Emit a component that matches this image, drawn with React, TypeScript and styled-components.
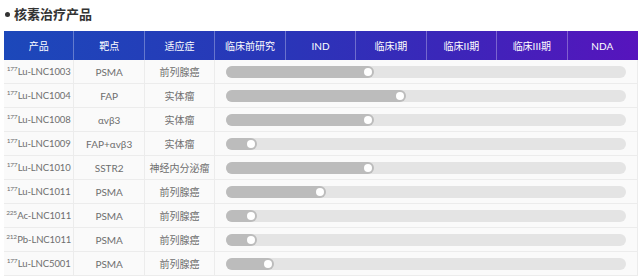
import React from 'react'
import styled, { createGlobalStyle } from 'styled-components'

type Product = {
  isotope: string
  name: string
  target: string
  indication: string
  progress: number
}

const phases = ['临床前研究', 'IND', '临床I期', '临床II期', '临床III期', 'NDA']

const products: Product[] = [
  { isotope: '177', name: 'Lu-LNC1003', target: 'PSMA', indication: '前列腺癌', progress: 147 },
  { isotope: '177', name: 'Lu-LNC1004', target: 'FAP', indication: '实体瘤', progress: 179 },
  { isotope: '177', name: 'Lu-LNC1008', target: 'αvβ3', indication: '实体瘤', progress: 147 },
  { isotope: '177', name: 'Lu-LNC1009', target: 'FAP+αvβ3', indication: '实体瘤', progress: 31 },
  { isotope: '177', name: 'Lu-LNC1010', target: 'SSTR2', indication: '神经内分泌瘤', progress: 147 },
  { isotope: '177', name: 'Lu-LNC1011', target: 'PSMA', indication: '前列腺癌', progress: 100 },
  { isotope: '225', name: 'Ac-LNC1011', target: 'PSMA', indication: '前列腺癌', progress: 31 },
  { isotope: '212', name: 'Pb-LNC1011', target: 'PSMA', indication: '前列腺癌', progress: 31 },
  { isotope: '177', name: 'Lu-LNC5001', target: 'PSMA', indication: '前列腺癌', progress: 48 },
]

const BAR_WIDTH = 399

const App: React.FC = () => {
  return (
    <Page>
      <GlobalStyle />
      <Title>
        <Dot />
        核素治疗产品
      </Title>
      <Table>
        <HeaderRow>
          <HeaderCell>产品</HeaderCell>
          <HeaderCell>靶点</HeaderCell>
          <HeaderCell>适应症</HeaderCell>
          {phases.map((p, i) => (
            <HeaderCell key={p} $last={i === phases.length - 1}>
              {p}
            </HeaderCell>
          ))}
        </HeaderRow>
        {products.map((item) => (
          <BodyRow key={item.isotope + item.name}>
            <ProductCell>
              <Isotope>{item.isotope}</Isotope>
              {item.name}
            </ProductCell>
            <Cell>{item.target}</Cell>
            <Cell>{item.indication}</Cell>
            <BarCell>
              <Track>
                <Fill style={{ width: `${(item.progress / BAR_WIDTH) * 100}%` }}>
                  <Thumb />
                </Fill>
              </Track>
            </BarCell>
          </BodyRow>
        ))}
      </Table>
    </Page>
  )
}

const GlobalStyle = createGlobalStyle`
  html, body {
    margin: 0;
    padding: 0;
    background: #ffffff;
  }
  body {
    font-family: Lato, "Noto Sans CJK SC", sans-serif;
  }
`

const Page = styled.div`
  width: 640px;
  padding: 4px 2px 0 4px;
  box-sizing: border-box;
`

const Title = styled.h2`
  display: flex;
  align-items: center;
  gap: 4px;
  margin: 0 0 8px 1px;
  height: 19px;
  font-size: 13px;
  font-weight: 700;
  color: #333333;
  font-family: "Noto Sans CJK SC", sans-serif;
`

const Dot = styled.span`
  width: 5px;
  height: 5px;
  border-radius: 50%;
  background: #333333;
  margin-top: 2px;
`

const Table = styled.div`
  width: 634px;
  display: flex;
  flex-direction: column;
  background: #fafafa;
`

const columns = 'repeat(9, 1fr)'

const HeaderRow = styled.div`
  display: grid;
  grid-template-columns: ${columns};
  height: 29px;
  background: linear-gradient(90deg, #1c48ba 0%, #2a35b8 45%, #3b26b9 70%, #5714bd 100%);
`

const HeaderCell = styled.div<{ $last?: boolean }>`
  display: flex;
  align-items: center;
  justify-content: center;
  color: #ffffff;
  font-size: 10px;
  border-right: 1px solid ${(p) => (p.$last ? 'transparent' : 'rgba(255, 255, 255, 0.3)')};
`

const BodyRow = styled.div`
  display: grid;
  grid-template-columns: ${columns};
  height: 24px;
  border-bottom: 1px solid #ececec;
  box-sizing: border-box;
`

const Cell = styled.div`
  display: flex;
  align-items: center;
  justify-content: center;
  font-size: 10px;
  color: #6e6e6e;
  border-right: 1px solid #ececec;
  white-space: nowrap;
`

const ProductCell = styled(Cell)`
  font-size: 9.5px;
  letter-spacing: -0.1px;
`

const Isotope = styled.span`
  font-size: 6.5px;
  letter-spacing: -0.3px;
  line-height: 1;
  align-self: flex-start;
  margin-top: 6px;
  margin-right: 0.5px;
`

const BarCell = styled.div`
  grid-column: span 6;
  display: flex;
  align-items: center;
  padding: 0 11px 0 11px;
  border-right: 1px solid #ececec;
`

const Track = styled.div`
  position: relative;
  flex: 1;
  height: 12px;
  border-radius: 6px;
  background: #e4e4e4;
`

const Fill = styled.div`
  position: relative;
  height: 100%;
  border-radius: 6px;
  background: #bcbcbc;
`

const Thumb = styled.span`
  position: absolute;
  right: 2px;
  top: 2px;
  width: 8px;
  height: 8px;
  border-radius: 50%;
  background: #ffffff;
`

export default App
